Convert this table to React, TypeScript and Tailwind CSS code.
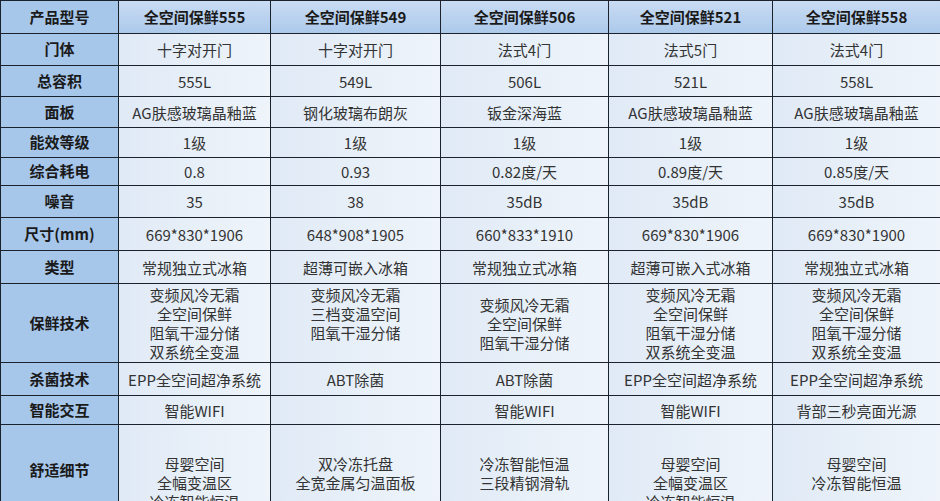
import React from 'react';

const widths = ['w-[118px]', 'w-[152px]', 'w-[170px]', 'w-[168px]', 'w-[164px]', 'w-[168px]'];

type Row = { label: string; h: string; cells: string[][]; top?: boolean };

const header = ['产品型号', '全空间保鲜555', '全空间保鲜549', '全空间保鲜506', '全空间保鲜521', '全空间保鲜558'];

const rows: Row[] = [
  { label: '门体', h: 'h-[32px]', cells: [['十字对开门'], ['十字对开门'], ['法式4门'], ['法式5门'], ['法式4门']] },
  { label: '总容积', h: 'h-[31px]', cells: [['555L'], ['549L'], ['506L'], ['521L'], ['558L']] },
  {
    label: '面板',
    h: 'h-[31px]',
    cells: [['AG肤感玻璃晶釉蓝'], ['钢化玻璃布朗灰'], ['钣金深海蓝'], ['AG肤感玻璃晶釉蓝'], ['AG肤感玻璃晶釉蓝']],
  },
  { label: '能效等级', h: 'h-[30px]', cells: [['1级'], ['1级'], ['1级'], ['1级'], ['1级']] },
  { label: '综合耗电', h: 'h-[28px]', cells: [['0.8'], ['0.93'], ['0.82度/天'], ['0.89度/天'], ['0.85度/天']] },
  { label: '噪音', h: 'h-[32px]', cells: [['35'], ['38'], ['35dB'], ['35dB'], ['35dB']] },
  {
    label: '尺寸(mm)',
    h: 'h-[33px]',
    cells: [['669*830*1906'], ['648*908*1905'], ['660*833*1910'], ['669*830*1906'], ['669*830*1900']],
  },
  {
    label: '类型',
    h: 'h-[33px]',
    cells: [['常规独立式冰箱'], ['超薄可嵌入冰箱'], ['常规独立式冰箱'], ['超薄可嵌入式冰箱'], ['常规独立式冰箱']],
  },
  {
    label: '保鲜技术',
    h: 'h-[79px]',
    cells: [
      ['变频风冷无霜', '全空间保鲜', '阻氧干湿分储', '双系统全变温'],
      ['变频风冷无霜', '三档变温空间', '阻氧干湿分储', ''],
      ['变频风冷无霜', '全空间保鲜', '阻氧干湿分储'],
      ['变频风冷无霜', '全空间保鲜', '阻氧干湿分储', '双系统全变温'],
      ['变频风冷无霜', '全空间保鲜', '阻氧干湿分储', '双系统全变温'],
    ],
  },
  {
    label: '杀菌技术',
    h: 'h-[33px]',
    cells: [['EPP全空间超净系统'], ['ABT除菌'], ['ABT除菌'], ['EPP全空间超净系统'], ['EPP全空间超净系统']],
  },
  {
    label: '智能交互',
    h: 'h-[29px]',
    cells: [['智能WIFI'], [''], ['智能WIFI'], ['智能WIFI'], ['背部三秒亮面光源']],
  },
  {
    label: '舒适细节',
    h: 'h-[92px]',
    top: true,
    cells: [
      ['母婴空间', '全幅变温区', '冷冻智能恒温'],
      ['双冷冻托盘', '全宽金属匀温面板'],
      ['冷冻智能恒温', '三段精钢滑轨'],
      ['母婴空间', '全幅变温区', '冷冻智能恒温'],
      ['母婴空间', '冷冻智能恒温'],
    ],
  },
];

const cellBase = 'shrink-0 border-r-[1.5px] border-b-[1.5px] border-[#1b222b] flex flex-col items-center text-center';

export default function App() {
  return (
    <div
      className="w-[940px] h-[501px] overflow-hidden bg-white"
      style={{ fontFamily: '"Noto Sans CJK SC", "Noto Sans", sans-serif' }}
    >
      <div className="w-[940px] border-l-[1.5px] border-t-[1.5px] border-[#1b222b]">
        <div className="flex h-[33px]">
          {header.map((t, i) => (
            <div
              key={t}
              className={`${cellBase} ${widths[i]} justify-center text-[15px] font-bold text-[#1a1a1a] ${
                i === 0 ? 'bg-[#a6c6ea]' : 'bg-gradient-to-b from-[#c9dcf3] to-[#acc9eb]'
              }`}
            >
              {t}
            </div>
          ))}
        </div>
        {rows.map((r) => (
          <div key={r.label} className={`flex ${r.h}`}>
            <div className={`${cellBase} ${widths[0]} justify-center bg-[#a6c6ea] text-[15px] font-bold text-[#1a1a1a]`}>
              {r.label}
            </div>
            {r.cells.map((lines, i) => (
              <div
                key={i}
                className={`${cellBase} ${widths[i + 1]} ${
                  r.top ? 'justify-start pt-[29px]' : 'justify-center'
                } bg-gradient-to-r from-[#e0eaf6] to-[#eef4fa] text-[15px] leading-[19px] text-[#333333]`}
              >
                {lines.map((l, j) => (
                  <div key={j} className="h-[19px] whitespace-nowrap">
                    {l}
                  </div>
                ))}
              </div>
            ))}
          </div>
        ))}
      </div>
    </div>
  );
}
